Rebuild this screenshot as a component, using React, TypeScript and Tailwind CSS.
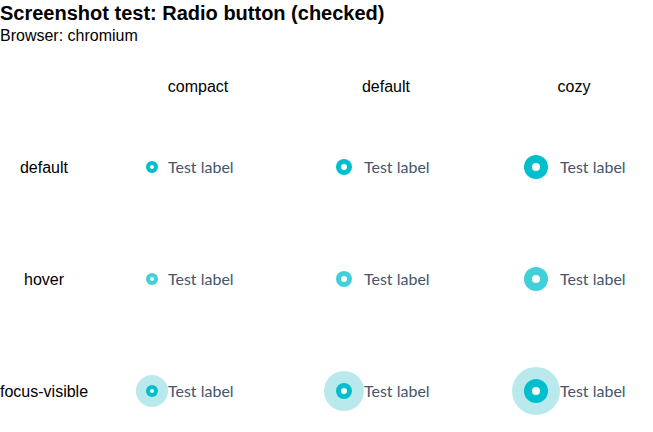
const sizes = [
  { name: "compact", ring: "w-[32px] h-[32px]", outer: "w-[12px] h-[12px]", dot: "w-[4px] h-[4px]" },
  { name: "default", ring: "w-[40px] h-[40px]", outer: "w-[16px] h-[16px]", dot: "w-[6px] h-[6px]" },
  { name: "cozy", ring: "w-[48px] h-[48px]", outer: "w-[24px] h-[24px]", dot: "w-[8px] h-[8px]" },
];

const states = ["default", "hover", "focus-visible"];

const Radio = ({ size, state }: { size: (typeof sizes)[number]; state: string }) => {
  const fill = state === "hover" ? "bg-[#3fd0da]" : "bg-[#00bfcd]";
  const ring = state === "focus-visible" ? "bg-[#b9e9ec]" : "";
  return (
    <div className="flex items-center">
      <div className={`${size.ring} ${ring} rounded-full flex items-center justify-center`}>
        <div className={`${size.outer} ${fill} rounded-full flex items-center justify-center`}>
          <div className={`${size.dot} bg-white rounded-full`} />
        </div>
      </div>
      <span className="text-[16px] text-[#43566b] font-['Lato',sans-serif]">Test label</span>
    </div>
  );
};

const App = () => {
  return (
    <div className="w-[653px] h-[432px] overflow-hidden bg-white text-black font-['Liberation_Sans',Arial,sans-serif]">
      <h1 className="text-[20px] leading-[27px] font-bold">Screenshot test: Radio button (checked)</h1>
      <p className="text-[16px] leading-[18px]">Browser: chromium</p>
      <div className="mt-[33px] grid grid-cols-[136px_188px_188px_1fr]">
        <div className="h-[18px]" />
        {sizes.map((s) => (
          <div key={s.name} className="w-[124px] text-center text-[16px] leading-[18px]">
            {s.name}
          </div>
        ))}
        <div className="col-span-4 h-[15px]" />
        {states.map((st) => (
          <div key={st} className="contents">
            <div className="h-[112px] flex items-center">
              <span className="w-[88px] mt-[2px] text-center text-[16px] whitespace-nowrap">{st}</span>
            </div>
            {sizes.map((s) => (
              <div key={s.name} className="h-[112px] flex items-center">
                <Radio size={s} state={st} />
              </div>
            ))}
          </div>
        ))}
      </div>
    </div>
  );
};

export default App;
